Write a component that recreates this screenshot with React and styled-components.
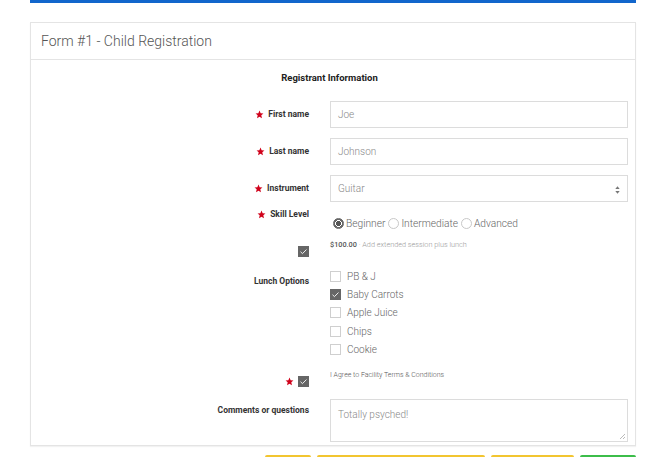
import React from 'react';
import styled, { createGlobalStyle } from 'styled-components';

const GlobalStyle = createGlobalStyle`
    body {
        margin: 0;
        background: #fff;
        font-family: Roboto, "Liberation Sans", sans-serif;
    }
`;

const lunchOptions = [
    { name: 'PB & J', checked: false },
    { name: 'Baby Carrots', checked: true },
    { name: 'Apple Juice', checked: false },
    { name: 'Chips', checked: false },
    { name: 'Cookie', checked: false },
];

const skillLevels = [
    { name: 'Beginner', checked: true },
    { name: 'Intermediate', checked: false },
    { name: 'Advanced', checked: false },
];

function Star() {
    return (
        <StarIcon viewBox="0 0 24 24">
            <path d="M12 1.5l3 7 7.5.7-5.7 5 1.8 7.6L12 17.8l-6.6 4 1.8-7.6-5.7-5 7.5-.7z" fill="#d0021b" />
        </StarIcon>
    );
}

function Check({ dark }) {
    return (
        <CheckBox $checked={dark}>
            {dark && (
                <svg viewBox="0 0 12 12" width="9" height="9">
                    <path d="M2 6.3l2.6 2.5L10 3.4" stroke="#fff" strokeWidth="1.2" fill="none" />
                </svg>
            )}
        </CheckBox>
    );
}

export default function App() {
    return (
        <Page>
            <GlobalStyle />
            <TopBar />
            <Card>
                <CardHeader>Form #1 - Child Registration</CardHeader>
                <CardBody>
                    <SectionTitle>Registrant Information</SectionTitle>

                    <Row $top={17}>
                        <Label $pt={8}><Star />First name</Label>
                        <Input>Joe</Input>
                    </Row>
                    <Row $top={10}>
                        <Label $pt={8}><Star />Last name</Label>
                        <Input>Johnson</Input>
                    </Row>
                    <Row $top={10}>
                        <Label $pt={8}><Star />Instrument</Label>
                        <Input>
                            Guitar
                            <SelectArrow>
                                <svg viewBox="0 0 8 12" width="5" height="8">
                                    <path d="M4 0L7.5 4.5h-7zM4 12L.5 7.5h7z" fill="#777" />
                                </svg>
                            </SelectArrow>
                        </Input>
                    </Row>
                    <Row $top={6}>
                        <Label $pt={1}><Star />Skill Level</Label>
                        <Radios>
                            {skillLevels.map((level) => (
                                <RadioItem key={level.name}>
                                    <Radio $checked={level.checked} />
                                    {level.name}
                                </RadioItem>
                            ))}
                        </Radios>
                    </Row>
                    <Row $top={11}>
                        <Label $pt={6}><Check dark /></Label>
                        <Price><b>$100.00</b> · Add extended session plus lunch</Price>
                    </Row>
                    <Row $top={10}>
                        <Label $pt={9}>Lunch Options</Label>
                        <OptionList>
                            {lunchOptions.map((option) => (
                                <OptionItem key={option.name}>
                                    <Check dark={option.checked} />
                                    {option.name}
                                </OptionItem>
                            ))}
                        </OptionList>
                    </Row>
                    <Row $top={12}>
                        <Label $pt={6}><Star /><Check dark /></Label>
                        <Agree>I Agree to Facility Terms &amp; Conditions</Agree>
                    </Row>
                    <Row $top={12}>
                        <Label $pt={6}>Comments or questions</Label>
                        <TextArea>
                            Totally psyched!
                            <Resize viewBox="0 0 8 8" width="8" height="8">
                                <path d="M7 2L2 7M7 5L5 7" stroke="#aaa" strokeWidth="0.8" />
                            </Resize>
                        </TextArea>
                    </Row>
                </CardBody>
            </Card>
            <Buttons>
                <Button $w={46} $color="#f2c530" />
                <Button $w={168} $color="#f2c530" />
                <Button $w={83} $color="#f2c530" />
                <Button $w={56} $color="#3cbd4a" />
            </Buttons>
        </Page>
    );
}

const Page = styled.div`
    width: 606px;
    margin: 0 30px;
`;

const TopBar = styled.div`
    height: 3px;
    background: #1266cc;
    margin-bottom: 19px;
`;

const Card = styled.div`
    border: 1px solid #e4e4e4;
    box-shadow: 0 1px 1px rgba(0, 0, 0, 0.05);
`;

const CardHeader = styled.div`
    height: 36px;
    padding: 0 10px;
    display: flex;
    align-items: center;
    font-size: 14px;
    font-weight: 300;
    color: #555;
    border-bottom: 1px solid #e4e4e4;
`;

const CardBody = styled.div`
    padding: 12px 7px 3px 0;
`;

const SectionTitle = styled.div`
    text-align: center;
    font-size: 9.5px;
    font-weight: 700;
    color: #222;
    line-height: 12px;
`;

const Row = styled.div`
    display: grid;
    grid-template-columns: 278px 1fr;
    column-gap: 21px;
    margin-top: ${(p) => p.$top}px;
`;

const Label = styled.div`
    display: flex;
    justify-content: flex-end;
    align-items: flex-start;
    gap: 4px;
    padding-top: ${(p) => p.$pt}px;
    font-size: 8.5px;
    font-weight: 700;
    color: #333;
    line-height: 11px;
`;

const StarIcon = styled.svg`
    width: 9px;
    height: 9px;
    margin-top: 1px;
`;

const Input = styled.div`
    position: relative;
    height: 27px;
    box-sizing: border-box;
    border: 1px solid #dcdcdc;
    padding: 0 7px;
    display: flex;
    align-items: center;
    font-size: 10px;
    font-weight: 300;
    color: #888;
`;

const SelectArrow = styled.span`
    position: absolute;
    right: 7px;
    top: 9px;
`;

const Radios = styled.div`
    display: flex;
    align-items: center;
    gap: 3px;
    padding-top: 10px;
    padding-left: 3px;
    font-size: 10.2px;
    font-weight: 300;
    color: #666;
`;

const RadioItem = styled.label`
    display: flex;
    align-items: center;
    gap: 2px;
`;

const Radio = styled.span`
    width: 11px;
    height: 11px;
    box-sizing: border-box;
    border-radius: 50%;
    border: 1px solid ${(p) => (p.$checked ? '#666' : '#c8c8c8')};
    background: ${(p) => (p.$checked
        ? 'radial-gradient(circle, #555 0 2.3px, #fff 2.6px 3.2px, #666 3.5px)'
        : '#fff')};
`;

const CheckBox = styled.span`
    width: 11px;
    height: 11px;
    box-sizing: border-box;
    display: inline-flex;
    align-items: center;
    justify-content: center;
    flex-shrink: 0;
    background: ${(p) => (p.$checked ? '#666' : '#fff')};
    border: 1px solid ${(p) => (p.$checked ? '#666' : '#cfcfcf')};
`;

const Price = styled.div`
    font-size: 7.3px;
    color: #999;
    font-weight: 300;
    line-height: 10px;
    b {
        color: #555;
        font-weight: 500;
    }
`;

const OptionList = styled.div`
    display: flex;
    flex-direction: column;
`;

const OptionItem = styled.label`
    display: flex;
    align-items: center;
    gap: 6px;
    height: 18.3px;
    font-size: 10px;
    font-weight: 300;
    color: #666;
`;

const Agree = styled.div`
    font-size: 7px;
    color: #555;
    font-weight: 300;
    line-height: 10px;
`;

const TextArea = styled.div`
    position: relative;
    height: 43px;
    box-sizing: border-box;
    border: 1px solid #dcdcdc;
    padding: 9px 7px;
    font-size: 10px;
    font-weight: 300;
    color: #888;
`;

const Resize = styled.svg`
    position: absolute;
    right: 1px;
    bottom: 1px;
`;

const Buttons = styled.div`
    display: flex;
    justify-content: flex-end;
    gap: 6px;
    margin-top: 9px;
`;

const Button = styled.div`
    width: ${(p) => p.$w}px;
    height: 28px;
    box-sizing: border-box;
    border: 2px solid ${(p) => p.$color};
    border-radius: 2px;
`;
